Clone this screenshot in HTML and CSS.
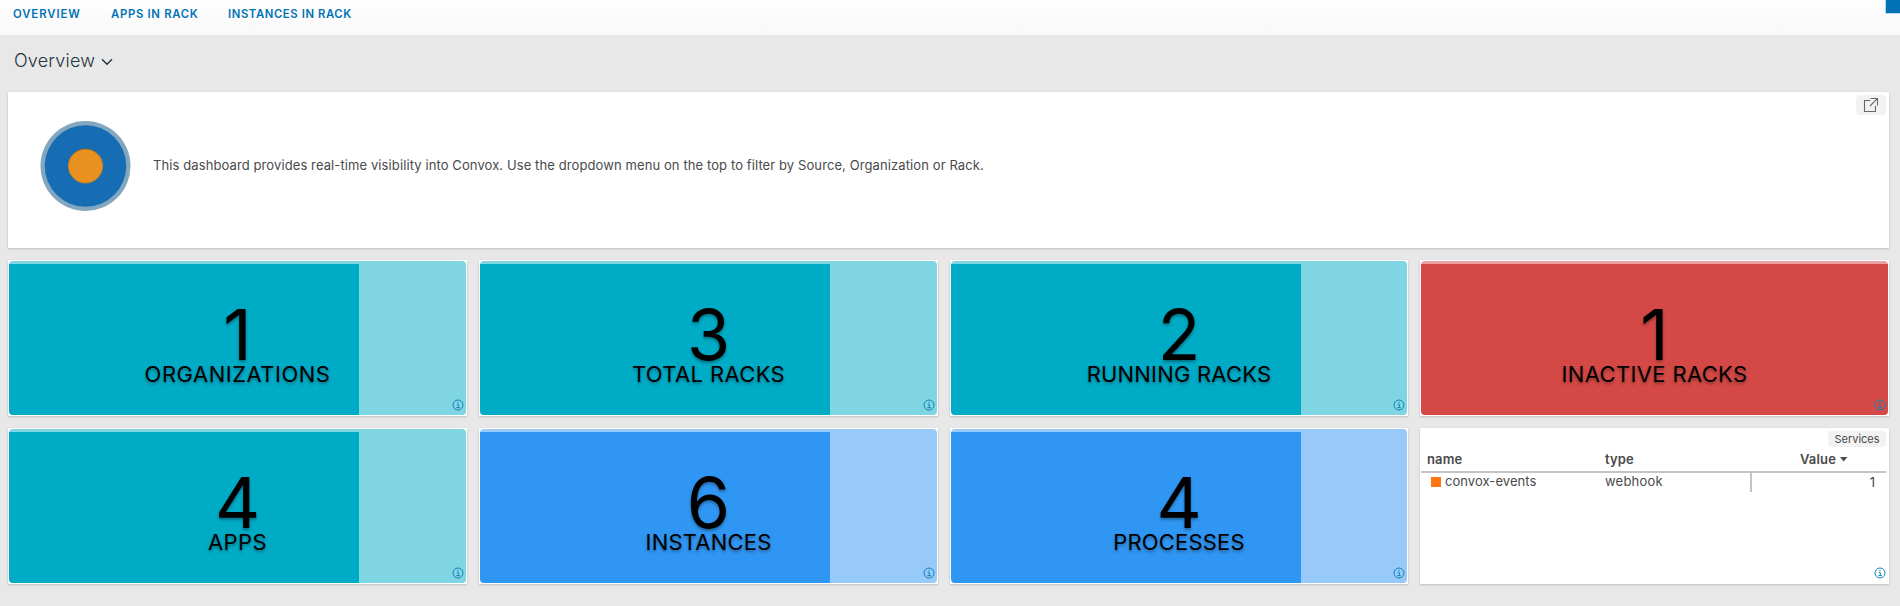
FILE: index.html
```html
<!DOCTYPE html>
<html lang="en">
<head>
<meta charset="utf-8">
<title>Convox Overview</title>
<link rel="stylesheet" href="styles.css">
</head>
<body>
<svg width="0" height="0" class="defs"><symbol id="info" viewBox="0 0 12 12"><circle cx="6" cy="6" r="5" fill="none" stroke="currentColor"/><path d="M4.8 5.4h1.5v3.1M4.4 8.6h3.4M5.4 3.4h1.2" fill="none" stroke="currentColor"/></symbol></svg>
<nav class="tabs">
  <a class="t1">OVERVIEW</a><a class="t2">APPS IN RACK</a><a class="t3">INSTANCES IN RACK</a>
  <span class="corner"></span>
</nav>
<header class="title"><h1>Overview</h1><svg width="12" height="8" viewBox="0 0 12 8"><path d="M1 1.2l5 5 5-5" fill="none" stroke="#25333d" stroke-width="1.4"/></svg></header>
<main class="grid">
  <section class="card intro">
    <svg class="logo" width="92" height="92" viewBox="0 0 92 92"><defs><linearGradient id="rim" x1="0" y1="0" x2="0" y2="1"><stop offset="0" stop-color="#9c6419"/><stop offset=".25" stop-color="#d08320"/><stop offset="1" stop-color="#c98022"/></linearGradient></defs><circle cx="45.5" cy="46" r="45" fill="#83a7bf"/><circle cx="45.5" cy="46" r="40.8" fill="#176db4"/><circle cx="45.5" cy="46" r="17" fill="#e89120" stroke="url(#rim)"/></svg>
    <p>This dashboard provides real-time visibility into Convox. Use the dropdown menu on the top to filter by Source, Organization or Rack.</p>
    <span class="open"><svg width="16" height="16" viewBox="0 0 16 16" fill="none" stroke="#65686f" stroke-width="1.1"><path d="M7.3 3.5H1.5v11h11V8.7M7.5 1.5h7v7M14.3 1.7L7 9"/></svg></span>
  </section>
  <section class="card"><div class="stat teal"><b>1</b><span class="l1">ORGANIZATIONS</span><svg class="info"><use href="#info"/></svg></div></section>
  <section class="card"><div class="stat teal"><b>3</b><span class="l2">TOTAL RACKS</span><svg class="info"><use href="#info"/></svg></div></section>
  <section class="card"><div class="stat teal"><b>2</b><span class="l3">RUNNING RACKS</span><svg class="info"><use href="#info"/></svg></div></section>
  <section class="card"><div class="stat red"><b>1</b><span class="l4">INACTIVE RACKS</span><svg class="info"><use href="#info"/></svg></div></section>
  <section class="card"><div class="stat teal"><b>4</b><span class="l5">APPS</span><svg class="info"><use href="#info"/></svg></div></section>
  <section class="card"><div class="stat blue"><b>6</b><span class="l6">INSTANCES</span><svg class="info"><use href="#info"/></svg></div></section>
  <section class="card"><div class="stat blue"><b>4</b><span class="l7">PROCESSES</span><svg class="info"><use href="#info"/></svg></div></section>
  <section class="card services">
    <div class="chip"><span>Services</span></div>
    <div class="row head"><span class="name"><i>name</i></span><span class="type"><i>type</i></span><span class="value"><i>Value</i><svg width="8" height="5"><path d="M0 0h7.4L3.7 4.6z" fill="#4a4a4a"/></svg></span></div>
    <div class="row body"><span class="name"><em></em><i>convox-events</i></span><span class="type"><i>webhook</i></span><span class="value"><i>1</i></span></div>
    <svg class="info"><use href="#info"/></svg>
  </section>
</main>
</body>
</html>
```
FILE: styles.css
```css
* { box-sizing: border-box; }
body { margin: 0; height: 606px; overflow: hidden; background: #e8e8e8; font-family: Inter, "Liberation Sans", sans-serif; color: #4a4a4a; }
.defs { position: absolute; }
.tabs { position: relative; display: flex; height: 35px; padding: 5px 0 0 13px; background: linear-gradient(#fff, #f8f8f8); color: #0072b5; font-size: 11.3px; line-height: 18px; font-weight: 600; }
.tabs a { flex: none; }
.t1 { width: 98px; letter-spacing: .95px; }
.t2 { width: 117px; letter-spacing: .7px; }
.t3 { letter-spacing: .6px; }
.corner { position: absolute; right: 0; top: 0; width: 15px; height: 14px; background: #0072b5; border: solid #b9d8ea; border-width: 0 0 1px 1px; background-clip: padding-box; }
.title { display: flex; height: 57px; padding: 14px 0 0 13px; }
.title h1 { margin: 0; width: 88px; padding-left: 1px; font-size: 18px; line-height: 24px; font-weight: 300; letter-spacing: .2px; color: #25333d; }
.title svg { margin-top: 9px; }
.grid { display: grid; grid-template-columns: 459px 459px 458px 469px; grid-auto-rows: 156px; gap: 12px; padding-left: 8px; }
.card { position: relative; background: #fff; box-shadow: 0 1px 2px #bfbfc4, 0 0 2px #e0e0e8; padding: 1px; }
.intro { grid-column: 1 / -1; display: flex; padding: 28px 0 0 32px; }
.intro p { margin: 35px 0 0 21px; font-size: 13px; line-height: 20px; letter-spacing: .1px; white-space: nowrap; }
.open { position: absolute; right: 3px; top: 3px; width: 30px; height: 20px; padding: 2px 0 0 7px; border-radius: 4px; background: #f2f2f2; }
.open svg { display: block; }
.stat { position: relative; height: 154px; border-radius: 4px; text-align: center; color: #000; text-shadow: 0 2px 3px rgba(0,0,0,.35); padding-top: 34px; overflow: hidden; }
.teal { background: linear-gradient(#00abc6, #00abc6) 0 3px / 350px 151px no-repeat #7fd5e2; }
.blue { background: linear-gradient(#3096f3, #3096f3) 0 3px / 350px 151px no-repeat #97caf9; }
.red { background: linear-gradient(#e9a2a1 3px, #d44945 3px); }
.stat b { display: block; font-size: 70px; line-height: 80px; font-weight: 400; }
.stat span { display: block; margin-top: -14px; font-size: 22px; line-height: 26px; }
.l1 { letter-spacing: .5px; }
.l2, .l4, .l5 { letter-spacing: .36px; }
.l3, .l6, .l7 { letter-spacing: .2px; }
.info { position: absolute; right: 2px; bottom: 4px; width: 12px; height: 12px; color: #1583b8; }
.services { padding: 3px 3px 0 1px; }
.services i { font-style: normal; }
.services .info { right: 3px; bottom: 5px; }
.chip { margin-left: auto; width: 58px; height: 16px; border-radius: 4px; background: #f2f2f2; font-size: 11px; line-height: 16px; text-align: center; }
.row { display: grid; grid-template-columns: 184px 145px 1fr; font-size: 13px; }
.head { height: 26px; line-height: 24px; font-weight: 600; letter-spacing: .15px; border-bottom: 2px solid #c4c4c4; }
.head .name { padding-left: 6px; }
.head .value { padding-left: 50px; }
.head svg { margin: 0 0 2px 4px; }
.body { height: 19px; line-height: 17px; }
.body .name { display: flex; padding-left: 10px; letter-spacing: .05px; }
.body .type { letter-spacing: .2px; }
.body em { width: 10px; height: 10px; margin: 4px 4px 0 0; background: #ff7512; }
.body .value { border-left: 2px solid #c4c4c4; text-align: right; padding-right: 11px; line-height: 19px; }
```
